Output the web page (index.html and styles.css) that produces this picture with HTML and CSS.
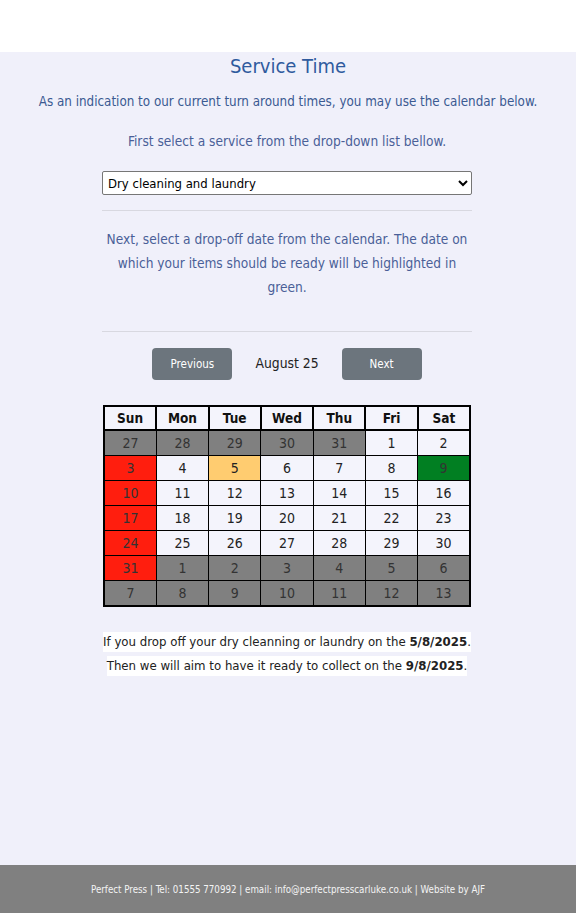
FILE: index.html
```html
<!DOCTYPE html>
<html>
<head>
<meta charset="utf-8">
<link rel="stylesheet" href="styles.css">
</head>
<body>
<div class="topbar"></div>
<main class="content">
  <h1 class="title">Service Time</h1>
  <p class="intro">As an indication to our current turn around times, you may use the calendar below.</p>
  <div class="panel">
    <p class="info">First select a service from the drop-down list bellow.</p>
    <select class="service">
      <option>Dry cleaning and laundry</option>
    </select>
    <hr class="rule">
    <p class="info next-info">Next, select a drop-off date from the calendar. The date on which your items should be ready will be highlighted in green.</p>
    <hr class="rule rule-low">
    <div class="nav">
      <button class="btn">Previous</button>
      <span class="month">August 25</span>
      <button class="btn">Next</button>
    </div>
    <table class="cal">
      <thead>
        <tr><th>Sun</th><th>Mon</th><th>Tue</th><th>Wed</th><th>Thu</th><th>Fri</th><th>Sat</th></tr>
      </thead>
      <tbody>
        <tr><td class="off">27</td><td class="off">28</td><td class="off">29</td><td class="off">30</td><td class="off">31</td><td>1</td><td>2</td></tr>
        <tr><td class="closed">3</td><td>4</td><td class="drop">5</td><td>6</td><td>7</td><td>8</td><td class="ready">9</td></tr>
        <tr><td class="closed">10</td><td>11</td><td>12</td><td>13</td><td>14</td><td>15</td><td>16</td></tr>
        <tr><td class="closed">17</td><td>18</td><td>19</td><td>20</td><td>21</td><td>22</td><td>23</td></tr>
        <tr><td class="closed">24</td><td>25</td><td>26</td><td>27</td><td>28</td><td>29</td><td>30</td></tr>
        <tr><td class="closed">31</td><td class="off">1</td><td class="off">2</td><td class="off">3</td><td class="off">4</td><td class="off">5</td><td class="off">6</td></tr>
        <tr><td class="off">7</td><td class="off">8</td><td class="off">9</td><td class="off">10</td><td class="off">11</td><td class="off">12</td><td class="off">13</td></tr>
      </tbody>
    </table>
    <div class="result">
      <span class="line">If you drop off your dry cleanning or laundry on the <b>5/8/2025</b>.</span>
      <span class="line">Then we will aim to have it ready to collect on the <b>9/8/2025</b>.</span>
    </div>
  </div>
</main>
<footer class="footer">Perfect Press | Tel: 01555 770992 | email: info@perfectpresscarluke.co.uk | Website by AJF</footer>
</body>
</html>
```
FILE: styles.css
```css
html, body {
  margin: 0;
  padding: 0;
  height: 100%;
}
body {
  font-family: "DejaVu Sans Condensed", "DejaVu Sans", sans-serif;
  background: #f0f0fa;
  display: flex;
  flex-direction: column;
  min-height: 913px;
}
.topbar {
  height: 52px;
  background: #ffffff;
}
.content {
  flex: 1;
  display: flex;
  flex-direction: column;
  align-items: center;
}
.title {
  margin: 0;
  font-weight: normal;
  font-size: 20px;
  line-height: 28px;
  color: #2f5b9e;
}
.intro {
  margin: 13px 0 0;
  font-size: 13.3px;
  line-height: 18px;
  color: #3b5a92;
  white-space: nowrap;
}
.panel {
  width: 370px;
  margin-right: 2px;
  display: flex;
  flex-direction: column;
  align-items: center;
}
.info {
  margin: 21px 0 0;
  font-size: 13.6px;
  line-height: 18px;
  color: #4a5f98;
  text-align: center;
}
.service {
  margin-top: 21px;
  width: 370px;
  height: 24px;
  font-family: inherit;
  font-size: 13px;
  color: #000;
  background: #fff;
  border: 1px solid #767676;
  border-radius: 2px;
  padding: 0 1px;
}
.rule {
  width: 370px;
  margin: 15px 0 0;
  border: 0;
  border-top: 1px solid #d8d8e0;
}
.next-info {
  margin-top: 16px;
  line-height: 24px;
  padding: 0 4px;
  font-size: 13.6px;
}
.rule-low {
  margin-top: 32px;
}
.nav {
  margin-top: 16px;
  display: flex;
  align-items: center;
  gap: 23px;
}
.btn {
  width: 80px;
  height: 32px;
  background: #6c757d;
  color: #fff;
  border: 0;
  border-radius: 4px;
  font-family: inherit;
  font-size: 11.5px;
  padding: 0;
}
.month {
  font-size: 13.8px;
  color: #222;
  margin-top: -3px;
}
.cal {
  margin-top: 25px;
  margin-left: 1px;
  align-self: flex-start;
  width: 368px;
  border-collapse: collapse;
  border: 2px solid #000;
  table-layout: fixed;
}
.cal th {
  height: 22px;
  border: 2px solid #000;
  background: #f4f4fc;
  font-size: 13.5px;
  font-weight: bold;
  color: #111;
  padding: 0;
}
.cal td {
  height: 24px;
  border: 1px solid #000;
  background: #f4f4fc;
  text-align: center;
  font-size: 14px;
  color: #222;
  padding: 0;
}
.cal td.off {
  background: #808080;
  color: #333;
}
.cal td.closed {
  background: #ff1e0e;
  color: #333;
}
.cal td.drop {
  background: #ffcc70;
}
.cal td.ready {
  background: #017f22;
  color: #333;
}
.result {
  margin-top: 25px;
  display: flex;
  flex-direction: column;
  align-items: center;
  gap: 4px;
}
.line {
  background: #fff;
  font-size: 13.1px;
  line-height: 20px;
  color: #222;
  white-space: nowrap;
}
.footer {
  height: 48px;
  background: #808080;
  color: #f4f4f4;
  font-size: 9.7px;
  display: flex;
  align-items: center;
  justify-content: center;
}
```
